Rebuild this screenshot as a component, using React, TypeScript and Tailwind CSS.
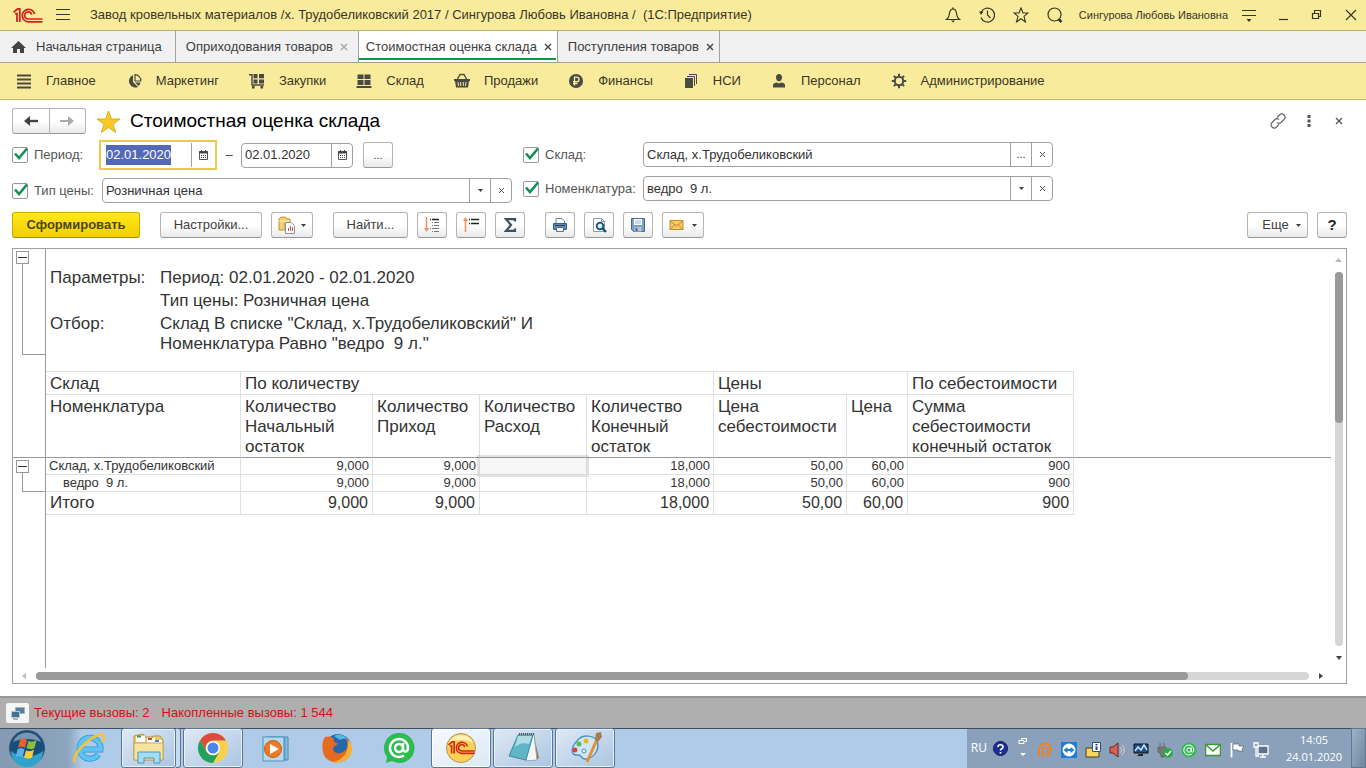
import { useEffect, useRef } from "react";
import type { ReactNode } from "react";

type IconProps = { children: ReactNode; w?: number; h?: number; className?: string };

function Icon({ children, w = 16, h = 16, className = "" }: IconProps) {
  return (
    <svg width={w} height={h} viewBox={`0 0 ${w} ${h}`} fill="none" aria-hidden="true" className={`shrink-0 ${className}`}>
      {children}
    </svg>
  );
}

function LogoPaths() {
  return (
    <>
      <path d="M0.5 4.2 4.6 1h2.2v13M2 5.6h2V14" stroke="#d3241c" strokeWidth="1.8" />
      <path d="M21.5 6A6.2 6.2 0 1 0 15.5 13.8H29.5" stroke="#d3241c" strokeWidth="1.8" />
      <path d="M18.6 6.6A3.5 3.5 0 1 0 15.5 11H29.5" stroke="#d3241c" strokeWidth="1.7" />
    </>
  );
}

const Caret = ({ className = "" }: { className?: string }) => (
  <Icon w={5} h={3} className={className}>
    <path d="M0 0h5L2.5 3z" fill="#404040" />
  </Icon>
);

const Cross = ({ color = "#555" }: { color?: string }) => (
  <Icon w={8} h={8}>
    <path d="m1 1 6 6M7 1 1 7" stroke={color} strokeWidth="1.4" />
  </Icon>
);

const navItems = [
  {
    title: "Главное",
    icon: <path d="M1 2.5h14M1 6.5h14M1 10.5h14M1 14.5h14" stroke="#4a4a45" strokeWidth="2" />,
  },
  {
    title: "Маркетинг",
    icon: (
      <>
        <path d="M7 2v7l5 5A6.5 6.5 0 1 1 7 2z" fill="#4a4a45" />
        <path d="M9 1.6V8h5.8A6 6 0 0 0 9 1.6z" stroke="#4a4a45" strokeWidth="1.2" />
        <path d="m9 9.5 3.5 3.5a6 6 0 0 0 2-3.5z" fill="#4a4a45" />
      </>
    ),
  },
  {
    title: "Закупки",
    icon: (
      <>
        <path d="M0 1.8h3V12h12" stroke="#4a4a45" strokeWidth="1.4" />
        <path d="M4.5 1h4v4.2h-4zM10 1h5v4.2h-5zM4.5 6.4h4v4h-4zM10 6.4h5v4h-5zM3 13h2.6v2.4H3zM11.5 13h2.6v2.4h-2.6z" fill="#4a4a45" />
      </>
    ),
  },
  {
    title: "Склад",
    icon: <path d="M1.5 1.5h6V6h-6zM8.5 1.5h6V6h-6zM1.5 7h6v5h-6zM8.5 7h6v5h-6zM.5 13h15v2H.5z" fill="#4a4a45" />,
  },
  {
    title: "Продажи",
    icon: (
      <>
        <path d="M0 6h16v2h-1l-1 6.5H2L1 8H0z" fill="#4a4a45" />
        <path d="M3.5 6 6 1.5h4L12.5 6" stroke="#4a4a45" strokeWidth="1.4" />
        <path d="m4 9 .5 4M6.7 9v4M9.3 9v4M12 9l-.5 4" stroke="#f9eb9c" />
      </>
    ),
  },
  {
    title: "Финансы",
    icon: (
      <>
        <circle cx="8" cy="8" r="7" fill="#4a4a45" />
        <path d="M6.5 12.5V4.200h2.300a2.200 2.200 0 0 1 0 4.400H5M5 10.500h4.500" stroke="#f9eb9c" strokeWidth="1.3" />
      </>
    ),
  },
  {
    title: "НСИ",
    icon: (
      <>
        <path d="M2 5h8v10H2z" fill="#4a4a45" />
        <path d="M4 3.5h7.500V13M6 1.500h7.500V11" stroke="#4a4a45" />
      </>
    ),
  },
  {
    title: "Персонал",
    icon: (
      <path d="M8 1c2 0 3 1.300 3 3.300C11 6.500 9.800 8.500 8 8.500S5 6.500 5 4.300C5 2.300 6 1 8 1zM2 14.500V12c0-1.500 2-2.200 4-2.500l2 1 2-1c2 .3 4 1 4 2.500v2.500z" fill="#4a4a45" />
    ),
  },
  {
    title: "Администрирование",
    icon: (
      <>
        <circle cx="8" cy="8" r="4.200" stroke="#4a4a45" strokeWidth="2" />
        <path d="M8 .8v3M8 12.200v3M.8 8h3M12.200 8h3M2.900 2.900 5 5M11 11l2.100 2.100M13.100 2.900 11 5M5 11l-2.100 2.100" stroke="#4a4a45" strokeWidth="2" />
      </>
    ),
  },
];

const tabs = [
  { title: "Оприходования товаров", active: false, cross: "#a5a5a5", width: "w-[183px]" },
  { title: "Стоимостная оценка склада", active: true, cross: "#444", width: "w-[199px]" },
  { title: "Поступления товаров", active: false, cross: "#444", width: "w-[162px]" },
];

function TitleBar() {
  return (
    <header className="flex h-[31px] items-center border-b border-[#b9ae73] bg-[#f9eb9c] pl-[13px] text-[13px] text-[#3a3625]">
      <Icon w={30} h={15}>
        <LogoPaths />
      </Icon>
      <button aria-label="Меню" className="ml-[13px]">
        <Icon w={14} h={12}>
          <path d="M0 .5h14M0 5.500h14M0 10.500h14" stroke="#3a3625" />
        </Icon>
      </button>
      <h1 className="ml-5 flex-1 truncate whitespace-pre">
        {"Завод кровельных материалов /х. Трудобеликовский 2017 / Сингурова Любовь Ивановна /  (1С:Предприятие)"}
      </h1>
      <div className="flex items-center gap-[18px]">
        <button aria-label="Уведомления">
          <Icon>
            <path d="M1.500 12.500h13c-3-2-2.500-4-3-6.500C11 3.500 10 2 8 2S5 3.500 4.500 6c-.5 2.500 0 4.500-3 6.500z" stroke="#3a3625" strokeWidth="1.2" />
            <path d="M8 .5V2" stroke="#3a3625" strokeWidth="1.5" />
            <path d="M6 13.500h4L8 15.500z" fill="#3a3625" />
          </Icon>
        </button>
        <button aria-label="История">
          <Icon>
            <path d="M2.200 5.200A7 7 0 1 1 2 10.500M8.500 3.500V8l3 3" stroke="#3a3625" strokeWidth="1.2" />
            <path d="M0 4.500h4.500L2 8z" fill="#3a3625" />
          </Icon>
        </button>
        <button aria-label="Избранное">
          <Icon>
            <path d="m8 1 2 5h5l-4 3.400L12.500 15 8 11.700 3.500 15 5 9.400 1 6h5z" stroke="#3a3625" strokeWidth="1.1" />
          </Icon>
        </button>
        <button aria-label="Поиск">
          <Icon>
            <circle cx="7.500" cy="7.500" r="6.500" stroke="#3a3625" strokeWidth="1.2" />
            <path d="m11.500 12 3 3" stroke="#3a3625" strokeWidth="2.5" />
          </Icon>
        </button>
      </div>
      <span className="ml-4 text-[11px]">Сингурова Любовь Ивановна</span>
      <div className="ml-[13px] flex items-center gap-[18px] pr-[7px]">
        <button aria-label="Сервис и настройки">
          <Icon>
            <path d="M1 3.500h14M1 8.500h14" stroke="#3a3625" strokeWidth="1.2" />
            <path d="M5.500 12h5L8 15z" fill="#3a3625" />
          </Icon>
        </button>
        <button aria-label="Свернуть">
          <Icon>
            <path d="M4 12.500h9" stroke="#3a3625" strokeWidth="1.2" />
          </Icon>
        </button>
        <button aria-label="Восстановить">
          <Icon>
            <path d="M3.500 6.500h6v5h-6zM5.500 6V3.500h6v6H10" stroke="#3a3625" strokeWidth="1.2" />
          </Icon>
        </button>
        <button aria-label="Закрыть">
          <Icon>
            <path d="m3 3 10 10M13 3 3 13" stroke="#3a3625" strokeWidth="1.2" />
          </Icon>
        </button>
      </div>
    </header>
  );
}

function TabBar() {
  return (
    <div className="flex h-8 border-b border-[#a5a390] bg-[#f1f1f1] text-[13px] text-[#404040]">
      <button className="flex items-center gap-[10px] border-r border-[#a0a0a0] pr-[13px] pl-[11px]">
        <Icon w={15} h={14}>
          <path d="M7.500 1 0 8h2v5h4V9h3v4h4V8h2z" fill="#444" />
        </Icon>
        Начальная страница
      </button>
      {tabs.map((tab) => (
        <div
          key={tab.title}
          className={`relative flex items-center gap-[7px] border-r border-[#a0a0a0] whitespace-nowrap ${tab.width} ${
            tab.active ? "bg-white pl-[7px]" : "pl-[10px]"
          }`}
        >
          <button>{tab.title}</button>
          <button aria-label={`Закрыть: ${tab.title}`}>
            <Cross color={tab.cross} />
          </button>
          {tab.active && <span className="absolute right-[1px] bottom-[2px] left-0 h-[2px] bg-[#0e9355]" />}
        </div>
      ))}
    </div>
  );
}

function NavBar() {
  return (
    <nav className="flex h-[37px] items-center gap-[30px] border-b border-[#c5b96e] bg-[#f9eb9c] pl-4 text-[13px] text-[#3a3625]">
      {navItems.map((item) => (
        <a key={item.title} href="#" className="flex items-center gap-[14px] whitespace-nowrap">
          <Icon>{item.icon}</Icon>
          {item.title}
        </a>
      ))}
    </nav>
  );
}

const btn =
  "flex h-[26px] items-center justify-center rounded-[3px] border border-[#b4b4b4] border-b-[#999] bg-gradient-to-b from-white from-50% to-[#e9e9e9] text-[13px] text-[#404040]";

function FilterLabel({ id, text, className }: { id: string; text: string; className: string }) {
  return (
    <div className={`flex shrink-0 items-center gap-[6px] ${className}`}>
      <span className="relative flex size-4">
        <input id={id} type="checkbox" defaultChecked className="size-4 appearance-none rounded-[2px] border border-[#999] bg-white" />
        <Icon w={16} h={15} className="pointer-events-none absolute bottom-[2px] left-[1px]">
          <path d="m2 7.500 4 4.500L14 2.500" stroke="#0f9152" strokeWidth="2.600" />
        </Icon>
      </span>
      <label htmlFor={id} className="text-[13px] whitespace-nowrap text-[#555]">
        {text}
      </label>
    </div>
  );
}

const CalendarIcon = () => (
  <Icon w={9} h={10}>
    <path d="M.5 1.500h8v8h-8z" stroke="#555" />
    <path d="M0 2.500h9" stroke="#444" strokeWidth="2" />
    <path d="M2.500 0v2M6.500 0v2" stroke="#444" />
    <path d="M2 5.500h1M4 5.500h1M6 5.500h1M2 7.500h1M4 7.500h1M6 7.500h1" stroke="#444" />
  </Icon>
);

function PeriodFilter() {
  const dateFrom = useRef<HTMLInputElement>(null);

  useEffect(() => {
    dateFrom.current?.focus();
    dateFrom.current?.select();
  }, []);

  return (
    <div className="flex h-[30px] items-center">
      <FilterLabel id="period" text="Период:" className="w-[87px]" />
      <div className="flex h-[30px] w-[118px] items-center border-2 border-[#ecc94b]">
        <input
          ref={dateFrom}
          aria-label="Начало периода"
          defaultValue="02.01.2020"
          className="w-0 flex-1 pl-[5px] text-[13px] outline-none selection:bg-[#5468b8] selection:text-white"
        />
        <button aria-label="Выбрать начало" className="flex h-6 w-6 items-center justify-center border-l border-[#a0a0a0]">
          <CalendarIcon />
        </button>
      </div>
      <span className="w-6 text-center text-[13px] text-[#404040]">–</span>
      <div className="flex h-[25px] w-[112px] rounded-[4px] border border-[#a0a0a0]">
        <input aria-label="Конец периода" defaultValue="02.01.2020" className="w-0 flex-1 pl-[3px] text-[13px] text-[#333]" />
        <button aria-label="Выбрать конец" className="flex w-[21px] items-center justify-center border-l border-[#a0a0a0]">
          <CalendarIcon />
        </button>
      </div>
      <button aria-label="Выбрать период" className={`${btn} ml-[10px] w-[30px]`}>
        <span className="text-[11px]">...</span>
      </button>
    </div>
  );
}

function ComboField({ label, value, list = true }: { label: string; value: string; list?: boolean }) {
  return (
    <div className="flex h-[25px] min-w-0 flex-1 rounded-[4px] border border-[#a0a0a0] text-[13px] text-[#333]">
      {list ? (
        <div className="relative flex min-w-0 flex-1">
          <select aria-label={label} className="w-full appearance-none pl-[3px] text-[13px]">
            <option>{value}</option>
          </select>
          <span className="pointer-events-none absolute inset-y-0 right-0 flex w-[21px] items-center justify-center border-l border-[#a0a0a0]">
            <Caret />
          </span>
        </div>
      ) : (
        <>
          <input aria-label={label} defaultValue={value} className="min-w-0 flex-1 pl-[3px]" />
          <button aria-label={`Выбрать: ${label}`} className="w-[21px] border-l border-[#a0a0a0] text-[11px]">
            ...
          </button>
        </>
      )}
      <button aria-label={`Очистить: ${label}`} className="flex w-[21px] items-center justify-center border-l border-[#a0a0a0]">
        <Icon w={7} h={7}>
          <path d="m1 1 5 5M6 1 1 6" stroke="#555" />
        </Icon>
      </button>
    </div>
  );
}

function Filters() {
  return (
    <div className="grid max-w-[1041px] grid-cols-[50fr_53fr] gap-[11px]">
      <div className="flex flex-col gap-2">
        <PeriodFilter />
        <div className="flex items-center">
          <FilterLabel id="price" text="Тип цены:" className="w-[90px]" />
          <ComboField label="Тип цены" value="Розничная цена" />
        </div>
      </div>
      <div className="flex flex-col gap-[9px] pt-[2px]">
        <div className="flex items-center">
          <FilterLabel id="store" text="Склад:" className="w-[120px]" />
          <ComboField label="Склад" value="Склад, х.Трудобеликовский" list={false} />
        </div>
        <div className="flex items-center">
          <FilterLabel id="item" text="Номенклатура:" className="w-[120px]" />
          <ComboField label="Номенклатура" value={"ведро\u00a0\u00a09 л."} />
        </div>
      </div>
    </div>
  );
}

function Toolbar() {
  return (
    <div className="mt-[9px] flex items-center">
      <button className="h-[26px] w-32 rounded-[3px] border border-[#c9ab00] border-b-[#a38b00] bg-gradient-to-b from-[#ffe81a] to-[#f2cf00] text-[13px] font-bold text-[#4d4615]">
        Сформировать
      </button>
      <button className={`${btn} ml-5 w-[102px]`}>Настройки...</button>
      <button aria-label="Варианты отчета" className={`${btn} ml-[9px] w-[42px] gap-[6px]`}>
        <Icon w={17} h={18}>
          <path d="M1 4c0-2 1-3 4-3s4 1 4 2h3v4H7v7H1z" fill="#f4ce6c" stroke="#c48f2f" />
          <path d="M1 5h10" stroke="#fff1bd" />
          <path d="M7.500 6.500h6l3 3v8h-9z" fill="#fff" stroke="#8298ad" />
          <path d="M10.500 15v-3M12.500 15v-5M14.500 15v-4" stroke="#d4574a" />
        </Icon>
        <Caret />
      </button>
      <button className={`${btn} ml-5 w-[75px]`}>Найти...</button>
      <div className="ml-[9px] flex gap-[9px]">
        <button aria-label="Развернуть группы" className={`${btn} w-[30px]`}>
          <Icon>
            <path d="M2.500 0v13" stroke="#ee8f62" strokeWidth="1.5" />
            <path d="M0 11h5l-2.500 4z" fill="#ee8f62" />
            <path d="M6 2.500h1M8 2.500h7" stroke="#222" strokeWidth="1.5" />
            <path d="M8 5.500h1M10 5.500h5M8 8.500h1M10 8.500h5M6 11.500h1M8 11.500h7M8 14.500h1M10 14.500h5" stroke="#777" />
          </Icon>
        </button>
        <button aria-label="Свернуть группы" className={`${btn} w-[30px]`}>
          <Icon>
            <path d="M2.500 2v13" stroke="#ee8f62" strokeWidth="1.5" />
            <path d="M0 4h5L2.500 0z" fill="#ee8f62" />
            <path d="M6 2.500h1M8 2.500h8M6 6.500h1M8 6.500h8" stroke="#222" strokeWidth="1.5" />
          </Icon>
        </button>
        <button aria-label="Сумма" className={`${btn} w-[30px]`}>
          <Icon>
            <path d="M13 4.500V2.200H4L9 8l-5 5.800h9v-2.300" stroke="#3e4f62" strokeWidth="2.2" />
          </Icon>
        </button>
      </div>
      <div className="ml-5 flex gap-[9px]">
        <button aria-label="Печать" className={`${btn} w-[30px]`}>
          <Icon>
            <path d="M4 6V1.500h6L12.500 4v2" fill="#fff" stroke="#6e8498" />
            <path d="M1.500 6.500h13v6h-13z" fill="#6289b0" stroke="#3b5c7d" />
            <path d="M4.500 10.500h7v4h-7z" fill="#fff" stroke="#5b7189" />
            <path d="M3 8.500h10" stroke="#264763" />
          </Icon>
        </button>
        <button aria-label="Просмотр" className={`${btn} w-[30px]`}>
          <Icon>
            <path d="M2.500 1.500h8l3 3v10h-11z" fill="#fff" stroke="#8b9dad" />
            <path d="M10.500 1.500v3h3" stroke="#8b9dad" />
            <circle cx="9" cy="9" r="3.300" fill="#dcecf5" stroke="#11527f" strokeWidth="1.8" />
            <path d="m11.500 11.500 3.500 3.500" stroke="#11527f" strokeWidth="2.4" />
          </Icon>
        </button>
        <button aria-label="Сохранить" className={`${btn} w-[30px]`}>
          <Icon>
            <path d="M1.500 1.500h13v13h-11l-2-2z" fill="#7b9fcb" stroke="#466a94" />
            <path d="M4 2h8v6H4z" fill="#fff" />
            <path d="M5 4h6M5 6h6" stroke="#9db2c6" />
            <path d="M4.500 10h7v4.500h-7z" fill="#b9c6cf" />
            <path d="M5.500 11h2v3h-2z" fill="#466a94" />
          </Icon>
        </button>
        <button aria-label="Отправить" className={`${btn} w-[42px] gap-[7px]`}>
          <Icon w={16} h={12}>
            <path d="M1 1.500h13v9H1z" fill="#f6cb64" stroke="#c48a2d" />
            <path d="m1 2 6.500 5L14 2M1 10.500l5-5M14 10.500l-5-5" stroke="#c48a2d" />
          </Icon>
          <Caret />
        </button>
      </div>
      <button className={`${btn} ml-auto w-[61px] gap-[7px] pl-2`}>
        Еще
        <Caret />
      </button>
      <button aria-label="Справка" className={`${btn} ml-[9px] w-[30px]`}>
        <span className="text-[15px] font-bold text-[#222]">?</span>
      </button>
    </div>
  );
}

function Toggle() {
  return (
    <button aria-label="Свернуть группу" className="ml-[3px] flex size-[13px] items-center justify-center border border-[#999] bg-white">
      <span className="h-px w-[9px] bg-[#333]" />
    </button>
  );
}

const columns = [
  "Количество Начальный остаток",
  "Количество Приход",
  "Количество Расход",
  "Количество Конечный остаток",
  "Цена себестоимости",
  "Цена",
  "Сумма себестоимости конечный остаток",
];

const rows = [
  { name: "Склад, х.Трудобеликовский", pad: "pl-[3px]", selected: true },
  { name: "ведро\u00a0\u00a09 л.", pad: "pl-[17px]", selected: false },
];

const values = ["9,000", "9,000", "", "18,000", "50,00", "60,00", "900"];

function ReportTable() {
  const head = "border-r border-b border-[#e0e0e0] pl-1 text-left align-top font-normal";

  return (
    <table className="w-full table-fixed border-separate border-spacing-0 text-[17px] leading-5 text-[#333]">
      <colgroup>
        <col className="w-[195px]" />
        <col className="w-[132px]" />
        <col className="w-[107px]" />
        <col className="w-[107px]" />
        <col className="w-[127px]" />
        <col className="w-[133px]" />
        <col className="w-[61px]" />
        <col className="w-[166px]" />
        <col />
      </colgroup>
      <thead>
        <tr className="h-6">
          <th className={`${head} border-t pt-[2px]`}>Склад</th>
          <th colSpan={4} className={`${head} border-t pt-[2px]`}>
            По количеству
          </th>
          <th colSpan={2} className={`${head} border-t pt-[2px]`}>
            Цены
          </th>
          <th className={`${head} border-t pt-[2px]`}>По себестоимости</th>
          <td />
        </tr>
        <tr className="h-[63px]">
          {["Номенклатура", ...columns].map((title) => (
            <th key={title} className={`${head} border-b-[#999] pt-[2px]`}>
              {title}
            </th>
          ))}
          <td className="border-b border-[#999]" />
        </tr>
      </thead>
      <tbody>
        {rows.map((row) => (
          <tr key={row.name} className="h-[17px] text-[13px] leading-4">
            <td className={`border-r border-b border-[#e0e0e0] whitespace-nowrap ${row.pad}`}>{row.name}</td>
            {values.map((value, i) => (
              <td key={i} className="relative border-r border-b border-[#e0e0e0] pr-[3px] text-right">
                {value}
                {row.selected && i === 2 && (
                  <span className="absolute -inset-[3px] border-2 border-black/8 bg-black/3" />
                )}
              </td>
            ))}
          </tr>
        ))}
        <tr className="h-[23px]">
          <td className="border-r border-b border-[#e0e0e0] pl-1">Итого</td>
          {values.map((value, i) => (
            <td key={i} className="border-r border-b border-[#e0e0e0] pr-1 text-right text-[16px]">
              {value}
            </td>
          ))}
        </tr>
      </tbody>
    </table>
  );
}

function Report() {
  return (
    <section className="mt-[10px] flex flex-1 flex-col border border-[#a0a0a0]">
      <div className="flex flex-1">
        <div className="flex w-[33px] flex-col border-r border-[#999]">
          <div className="h-[209px] border-b border-[#999] pt-[2px]">
            <Toggle />
            <div className="ml-[9px] h-[91px] border-b border-l border-[#999]" />
          </div>
          <div className="pt-[2px]">
            <Toggle />
            <div className="ml-[9px] h-[19px] border-b border-l border-[#999]" />
          </div>
        </div>
        <div className="min-w-0 flex-1">
          <dl className="grid h-[122px] grid-cols-[110px_1fr] content-start gap-y-[3px] pt-[19px] pl-1 text-[17px] leading-5 text-[#333]">
            <dt>Параметры:</dt>
            <dd>Период: 02.01.2020 - 02.01.2020</dd>
            <dd className="col-start-2">Тип цены: Розничная цена</dd>
            <dt>Отбор:</dt>
            <dd>
              Склад В списке "Склад, х.Трудобеликовский" И
              <br />
              Номенклатура Равно "ведро&nbsp;&nbsp;9 л."
            </dd>
          </dl>
          <ReportTable />
        </div>
        <div className="flex w-[15px] flex-col items-center pt-[9px] pb-2">
          <Icon w={7} h={4}>
            <path d="M0 4h7L3.500 0z" fill="#bbb" />
          </Icon>
          <div className="mt-[10px] flex-1 self-center rounded-full bg-[#d6d6d6]">
            <div className="h-[151px] w-2 rounded-full bg-[#999]" />
          </div>
          <Icon w={6} h={4} className="mt-[10px]">
            <path d="M0 0h6L3 4z" fill="#444" />
          </Icon>
        </div>
      </div>
      <div className="flex h-[15px] items-center gap-[10px] pr-[23px] pl-[9px]">
        <Icon w={4} h={6}>
          <path d="M4 0v6L0 3z" fill="#bbb" />
        </Icon>
        <div className="h-2 flex-1 rounded-full bg-[#d6d6d6]">
          <div className="h-2 w-[90.5%] rounded-full bg-[#999]" />
        </div>
        <Icon w={4} h={6}>
          <path d="M0 0v6l4-3z" fill="#444" />
        </Icon>
      </div>
    </section>
  );
}

function ReportPage() {
  return (
    <main className="flex flex-1 flex-col bg-white pt-2 pr-[19px] pb-3 pl-3">
      <div className="mb-[6px] flex items-center">
        <div className="flex w-[74px]">
          <button aria-label="Назад" className={`${btn} flex-1 rounded-r-none`}>
            <Icon w={14} h={10}>
              <path d="M14 5H4" stroke="#444" strokeWidth="2.4" />
              <path d="m0 5 6-5v10z" fill="#444" />
            </Icon>
          </button>
          <button aria-label="Вперед" className={`${btn} flex-1 rounded-l-none border-l-0`}>
            <Icon w={14} h={10}>
              <path d="M0 5h10" stroke="#aaa" strokeWidth="2" />
              <path d="M14 5 8 0v10z" fill="#aaa" />
            </Icon>
          </button>
        </div>
        <button aria-label="В избранное" className="ml-[10px]">
          <Icon w={25} h={23}>
            <path d="m12.500 1 2.900 8H24l-7 5.200 2.700 8.300-7.200-5-7.200 5L8 14.200 1 9h8.600z" fill="#fbc926" stroke="#dfa91c" />
          </Icon>
        </button>
        <h2 className="ml-[9px] text-[19px] leading-6 text-black">Стоимостная оценка склада</h2>
        <div className="ml-auto flex items-center">
          <button aria-label="Получить ссылку">
            <Icon>
              <path d="M7 4.500 9.500 2a3 3 0 0 1 4.500 4.500L11 9.500a3 3 0 0 1-4 0M9 11.500 6.500 14A3 3 0 0 1 2 9.500l3-3a3 3 0 0 1 4 0" stroke="#666" strokeWidth="1.2" />
            </Icon>
          </button>
          <button aria-label="Еще действия" className="ml-[21px]">
            <Icon w={4} h={12}>
              <path d="M.5 0h3v3h-3zM.5 4.500h3v3h-3zM.5 9h3v3h-3z" fill="#555" />
            </Icon>
          </button>
          <button aria-label="Закрыть форму" className="mr-1 ml-6">
            <Cross />
          </button>
        </div>
      </div>
      <Filters />
      <Toolbar />
      <Report />
    </main>
  );
}

function StatusBar() {
  return (
    <div className="flex h-8 items-center border-t-2 border-[#989898] bg-[#afafaf] pl-[6px] text-[13px] text-[#d80f14]">
      <button aria-label="Соединение" className="flex h-5 w-[23px] items-center justify-center rounded-[2px] bg-[#f5f5f5]">
        <Icon w={15} h={14}>
          <path d="M5.500 1.500h9v6h-9z" fill="#577f9f" stroke="#9db3c1" />
          <path d="M1.500 5.500h8v6h-8z" fill="#456f90" stroke="#b9c9d3" />
          <path d="M3 13h5" stroke="#777" />
        </Icon>
      </button>
      <span className="ml-[5px]">Текущие вызовы: 2</span>
      <span className="ml-3">Накопленные вызовы: 1 544</span>
    </div>
  );
}

const taskOpen =
  "rounded-[3px] border border-[#5c7594] bg-gradient-to-br from-[#dfe9f4] to-[#aac5e2] shadow-[inset_0_0_0_1px_#e6f0fa]";
const taskActive =
  "rounded-[3px] border border-[#5c7594] bg-gradient-to-br from-[#f6fafd] to-[#dbe8f5] shadow-[inset_0_0_0_1px_#fff]";

const taskApps = [
  {
    name: "Internet Explorer",
    frame: "",
    icon: (
      <>
        <path d="M25.500 22.500A10.500 10.500 0 1 1 27.500 17.500H9" stroke="#2b97d8" strokeWidth="6" />
        <path d="M25.500 22.500A10.500 10.500 0 1 1 27.500 17.500H9" stroke="#5fc2f3" strokeWidth="4.500" />
        <path d="M2.500 30C-4 27 15 4 28 2.500c5 0 3 5 1 8" stroke="#f5c531" strokeWidth="2.500" />
      </>
    ),
  },
  {
    name: "Проводник",
    frame: taskOpen,
    stacked: true,
    icon: (
      <>
        <path d="M2 4 11 2l2 3h7l1-1h7l3 4v20H2z" fill="#e8ca70" stroke="#b99740" />
        <path d="M4 4h9v6H4zM15 6h8v5h-8zM22 8h8v4h-8z" fill="#fff" />
        <path d="M5 4.500h4" stroke="#3d9e49" strokeWidth="2" />
        <path d="M16 7h4" stroke="#c94a35" strokeWidth="2" />
        <path d="M23 9h4" stroke="#3a86c8" strokeWidth="2" />
        <path d="M2 11h29v17H2z" fill="#f7e3a0" stroke="#c9a952" />
        <path d="M6 31V20h22v11h-6v-5H12v5z" fill="#a6dcf2" stroke="#4599be" />
      </>
    ),
  },
  {
    name: "Google Chrome",
    frame: taskOpen,
    icon: (
      <>
        <circle cx="16" cy="16" r="15" fill="#f9d04b" />
        <path d="M3 8.500A15 15 0 0 1 29 8.500H16a7.500 7.500 0 0 0-6.500 11.200z" fill="#dd4b3e" />
        <path d="M3 8.500l6.600 11.200A7.500 7.500 0 0 0 22.500 19.700L16 31A15 15 0 0 1 3 8.500z" fill="#1fa160" />
        <circle cx="16" cy="16" r="7" fill="#fff" />
        <circle cx="16" cy="16" r="5.500" fill="#4a86ea" />
      </>
    ),
  },
  {
    name: "Media Player",
    frame: "",
    icon: (
      <>
        <path d="M8 5h21v23H8z" fill="#8dbfdf" stroke="#4786b5" />
        <path d="M4 5h21v24H4zM26 6v22" fill="#b4d9ee" stroke="#4c8fbe" />
        <circle cx="14" cy="17" r="8.500" fill="#ef7a22" stroke="#cf5c10" />
        <path d="m11 12 9 5-9 5z" fill="#fff" />
      </>
    ),
  },
  {
    name: "Firefox",
    frame: "",
    icon: (
      <>
        <circle cx="17" cy="15" r="13" fill="#2367ac" />
        <path d="M13 4c5-3 11-1 14 4-3-2-6-1-8 0z" fill="#55b7e5" />
        <path d="M2 9c2-5 3-5 4-4 3-1 5 0 7 2-1 3 2 4 4 4-1 3-5 3-5 6 1 6 10 6 14-1 1-4 0-8-2-10 8 4 8 15 3 20-6 6-18 6-23-1C1 20 1 13 2 9z" fill="#e66a1f" />
        <path d="M27 8c6 5 5 14-1 19-5 3-10 4-14 3 10-2 16-9 15-22z" fill="#f6b331" />
      </>
    ),
  },
  {
    name: "Агент Mail.Ru",
    frame: "",
    icon: (
      <>
        <path d="M16 1a15 15 0 1 1-7 28L3 31l1-6A15 15 0 0 1 16 1z" fill="#2cbb4e" />
        <circle cx="16" cy="16" r="4" stroke="#fff" strokeWidth="2.500" />
        <path d="M20 11v6c0 4 5 3 5-1a9 9 0 1 0-4 7.500" stroke="#fff" strokeWidth="2.500" />
      </>
    ),
  },
  {
    name: "1С:Предприятие",
    frame: taskActive,
    icon: (
      <>
        <circle cx="16" cy="16" r="14.500" fill="#fbd155" stroke="#b59352" />
        <path d="M4 11a13 13 0 0 1 24 0c-6-4-18-4-24 0z" fill="#fff1b4" />
        <g transform="translate(3 9) scale(.9)">
          <LogoPaths />
        </g>
      </>
    ),
  },
  {
    name: "Блокнот",
    frame: taskOpen,
    icon: (
      <>
        <path d="m27 4 5 22-5 3z" fill="#a1733d" />
        <path d="M12 2h15l3 26-12 1z" fill="#f3f7f8" stroke="#8ea7b0" />
        <path d="M11 3h15l-7 25-17-4z" fill="#60b5c8" stroke="#3d8b9f" />
        <path d="M11 4h14l-3 8c-6-2-10 0-14 3z" fill="#afdce5" />
        <path d="M12 2h15" stroke="#555" strokeWidth="2" strokeDasharray="1 1" />
      </>
    ),
  },
  {
    name: "Paint",
    frame: taskOpen,
    icon: (
      <>
        <path d="M8 9C13 2 25 3 28 9c3 7-2 17-11 18-5 1-4-5-8-4-8 1-7-8-1-14z" fill="#cfe6f5" stroke="#4a95c6" strokeWidth="1.5" />
        <circle cx="6" cy="18" r="2.500" fill="#dd4438" />
        <circle cx="10" cy="12" r="2.500" fill="#5fb94d" />
        <circle cx="17" cy="9" r="2.500" fill="#f0b423" />
        <circle cx="15" cy="19" r="2" fill="#fff" stroke="#3f8bc2" />
        <path d="m29 5-11 25" stroke="#e58f35" strokeWidth="3" />
        <path d="m26 8 1-7 5-1 1 5-4 5z" fill="#a87c53" />
      </>
    ),
  },
];

const trayIcons = [
  {
    name: "Punto",
    icon: (
      <>
        <path d="M2 14.500V7a6 6 0 1 1 6 6.500" stroke="#ef8122" strokeWidth="2" />
        <path d="M6 15.500V8a2.500 2.500 0 1 1 2.500 2.500" stroke="#ef8122" strokeWidth="1.600" />
      </>
    ),
  },
  {
    name: "TeamViewer",
    icon: (
      <>
        <path d="M0 0h16v16H0z" fill="#1b7dd3" />
        <circle cx="8" cy="8" r="6.500" fill="#fff" />
        <path d="m2.500 8 4-3v2h3V5l4 3-4 3V9h-3v2z" fill="#1b7dd3" />
      </>
    ),
  },
  {
    name: "Информация",
    icon: (
      <>
        <path d="M1 6h6l1 2h6v7H1z" fill="#f4d65a" stroke="#463e20" />
        <path d="M7.500.5h8v9h-8z" fill="#fff" stroke="#30517d" />
        <path d="M11.500 2v1.500M11.500 4.500V8" stroke="#173c91" strokeWidth="2" />
      </>
    ),
  },
  {
    name: "Громкость",
    icon: (
      <>
        <path d="M1 5h3l5-4v14l-5-4H1z" fill="#d96150" stroke="#5d2b2b" />
        <path d="M11 5c2 2 2 4 0 6M13 3c3 3 3 7 0 10" stroke="#e9d2cd" />
      </>
    ),
  },
  {
    name: "Монитор",
    icon: (
      <>
        <path d="M1 2h14v9H1z" fill="#1f4e8c" stroke="#111" />
        <path d="m2 9 3-4 3 3 3-5 3 5" stroke="#c9e1f7" strokeWidth="1.5" />
        <path d="M6 12h4v2H4z" fill="#222" />
      </>
    ),
  },
  {
    name: "Устройства",
    icon: (
      <>
        <path d="M3 1v3M7 1v3M1 5h8v5l-2 2v3H4v-3l-3-2z" fill="#777" stroke="#666" />
        <circle cx="11" cy="11" r="5" fill="#2cab45" />
        <path d="m8.500 11 2 2L14 9" stroke="#fff" strokeWidth="1.5" />
      </>
    ),
  },
  {
    name: "Агент",
    icon: (
      <>
        <circle cx="8" cy="8" r="7.500" fill="#38b958" />
        <circle cx="8" cy="8" r="2.200" stroke="#fff" />
        <path d="M10.300 5.500v3.500c0 2 2.500 1.500 2.500-1a5 5 0 1 0-2 4" stroke="#fff" />
      </>
    ),
  },
  {
    name: "Почта",
    icon: (
      <>
        <path d="M.5 2.500h15v11H.5z" fill="#fff" stroke="#3c953b" strokeWidth="1.5" />
        <path d="m1 3 7 6 7-6" stroke="#3c953b" strokeWidth="1.5" />
      </>
    ),
  },
  {
    name: "Центр поддержки",
    icon: (
      <>
        <path d="M2.500 1v14.500" stroke="#fff" strokeWidth="1.8" />
        <path d="M4 2h6v2h5l-2 3 1 2H9V8H4z" fill="#fff" stroke="#51657d" strokeWidth=".7" />
      </>
    ),
  },
  {
    name: "Сеть",
    icon: (
      <>
        <path d="M5 4h10v8H5zM7 15h6M10 12v3" fill="#5c7390" stroke="#fff" strokeWidth="1.3" />
        <path d="M1 1h4v4H1zM3 5v9h3" stroke="#fff" strokeWidth="1.3" />
      </>
    ),
  },
];

function Taskbar() {
  return (
    <footer className="flex h-10 items-center bg-[linear-gradient(to_right,#8499b2_0,#8da5bf_68px,#b0cbe7_82px)] font-['Open_Sans','Noto_Sans',sans-serif] text-[12px] text-white shadow-[inset_0_1px_0_#3d4d5f]">
      <button aria-label="Пуск" className="flex h-10 w-[59px] items-center pl-2">
        <Icon w={38} h={38}>
          <circle cx="19" cy="19" r="17.500" fill="#174f7b" stroke="#39546e" />
          <path d="M3 22a16 16 0 0 0 32 0c-8 7-24 7-32 0z" fill="#2ea3cd" />
          <path d="M5 13a15 15 0 0 1 28 0c-8-4-20-4-28 0z" fill="#7895b2" />
          <path d="M12 11c3-2 5-1 7 0l-2 8c-2-1-4-2-7 0z" fill="#e9622b" />
          <path d="M20.500 12c3 1 5 1 8-1l-2 8c-3 2-5 1-8 0z" fill="#8dbf3d" />
          <path d="M9.500 20.500c3-2 5-1 7 0l-2 8c-2-1-4-2-7 0z" fill="#5ab3e6" />
          <path d="M18 21.500c3 1 5 1 8-1l-2 8c-3 2-5 1-8 0z" fill="#fbcb3e" />
        </Icon>
      </button>
      <div className="flex gap-[2px]">
        {taskApps.map((app) => (
          <button key={app.name} aria-label={app.name} className="flex h-10 w-[60px] shrink-0">
            <span className={`flex h-10 flex-1 items-center justify-center ${app.frame}`}>
              <Icon w={33} h={33}>{app.icon}</Icon>
            </span>
            {app.stacked && <span className="h-10 w-[5px] rounded-r-[3px] border-y border-r border-[#5c7594] bg-[#c8dbee]" />}
          </button>
        ))}
      </div>
      <div className="ml-auto flex h-10 items-center bg-[#8ba1bb] pl-1 shadow-[inset_0_1px_0_#3d4d5f]">
        <button aria-label="Язык ввода">RU</button>
        <button aria-label="Справка" className="ml-[6px]">
          <Icon w={15} h={15}>
            <circle cx="7.500" cy="7.500" r="7" fill="#1c2f9e" stroke="#111c59" />
            <path d="M5 6c0-3 5-3 5 0 0 2-2.500 1.500-2.500 3.500M7.500 11v1.500" stroke="#fff" strokeWidth="1.700" />
          </Icon>
        </button>
        <button aria-label="Скрытые значки" className="ml-[10px]">
          <Icon w={10} h={20}>
            <path d="M1 5.500h5v-3H1zM3.500 2V.500h5v3H7" stroke="#fff" />
            <path d="M2 15h6l-3 3z" fill="#fff" />
          </Icon>
        </button>
        <div className="ml-[9px] flex gap-2 pt-1">
          {trayIcons.map((item) => (
            <button key={item.name} aria-label={item.name}>
              <Icon>{item.icon}</Icon>
            </button>
          ))}
        </div>
        <div className="ml-[14px] w-[62px] text-center text-[11px] leading-[17px]">
          <div>14:05</div>
          <div>24.01.2020</div>
        </div>
        <button
          aria-label="Свернуть все окна"
          className="ml-[6px] h-10 w-[15px] border border-[#63788f] bg-gradient-to-br from-[#9fb3c8] to-[#6e879f]"
        />
      </div>
    </footer>
  );
}

export default function App() {
  return (
    <div className="flex min-h-screen flex-col font-['Liberation_Sans',Arial,sans-serif]">
      <TitleBar />
      <TabBar />
      <NavBar />
      <ReportPage />
      <StatusBar />
      <Taskbar />
    </div>
  );
}
